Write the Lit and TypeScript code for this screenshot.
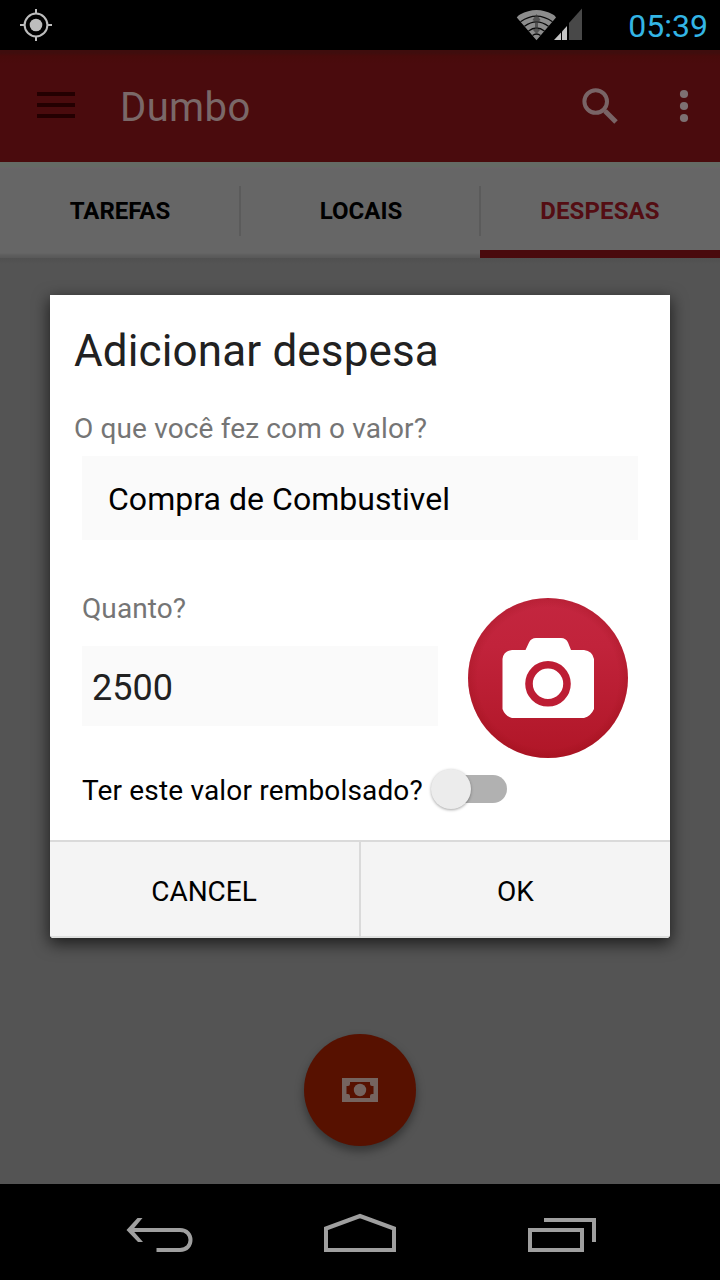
import { LitElement, html, css } from "lit";
import { customElement, property, state } from "lit/decorators.js";
import { classMap } from "lit/directives/class-map.js";

@customElement("status-bar")
class StatusBar extends LitElement {
  static styles = css`
    :host { display: flex; align-items: center; height: 50px; background: #000; }
    svg { display: block; }
    .gps { margin-left: 20px; }
    .signals { margin-left: auto; margin-right: 46px; }
    .clock { color: #33b5e5; font-size: 32px; line-height: 50px; padding-top: 1px; margin-right: 12px; height: 49px; white-space: nowrap; }
  `;
  render() {
    return html`
      <svg class="gps" width="32" height="50" viewBox="0 0 32 50" fill="none" stroke="#bdbdbd" stroke-width="2">
        <circle cx="16" cy="25" r="11.4" />
        <path d="M16 9v4M16 37v4M0 25h4M28 25h4" />
        <circle cx="16" cy="25" r="6.3" fill="#bdbdbd" stroke="none" />
      </svg>
      <svg class="signals" width="66" height="50" viewBox="516 0 66 50">
        <path d="M516.8 17.5Q518 15.500 520 14.500Q536.500 5.500 553 14.500Q555 15.500 556 17.500L536.500 40.300Z" fill="#8c8c8c" />
        <path d="M520.500 21.800Q536.500 10.500 552.500 21.800M524.500 26.300Q536.500 17.500 548.500 26.300M528.500 31Q536.500 25 544.500 31M532.500 35.500Q536.500 32.500 540.500 35.500" fill="none" stroke="#0a0a0a" stroke-width="1.300" />
        <path d="M536.500 14l4 6-2.500 1.500v7l2 1.500-3.500 4-3.500-4 2-1.500v-7l-2.500-1.500z" fill="#3a3a3a" opacity=".7" />
        <path d="M554 40l7-7.500V40z" fill="#c4c4c4" />
        <path d="M562 40v-8.500l5-5.500v14z" fill="#c4c4c4" />
        <path d="M569 40V23L582 8.500V40z" fill="#484848" />
      </svg>
      <div class="clock">05:39</div>
    `;
  }
}

@customElement("app-bar")
class AppBar extends LitElement {
  @property() heading = "";
  static styles = css`
    :host {
      display: flex; align-items: center; height: 112px;
      background: linear-gradient(#3f0d0d 0, #3f0d0d 3px, #480b0b 6px, #4a0b0d 14px);
    }
    svg { display: block; }
    .menu { margin-left: 36px; }
    .title { margin-left: 44px; padding-top: 3px; font-size: 40px; line-height: 46px; letter-spacing: .4px; color: #7a6868; }
    .search { margin-left: auto; }
    .more { margin-left: 57px; margin-right: 29px; }
  `;
  render() {
    return html`
      <svg class="menu" width="40" height="112" viewBox="36 50 40 112" stroke="#240001" stroke-width="4">
        <path d="M37 94h38M37 105h38M37 116h38" />
      </svg>
      <div class="title">${this.heading}</div>
      <svg class="search" width="40" height="112" viewBox="580 50 40 112" fill="none" stroke="#796466">
        <circle cx="595.700" cy="101.500" r="11.300" stroke-width="4" />
        <path d="M603.500 109.500l1.500 1.800" stroke-width="3" />
        <path d="M605 111l11 11" stroke-width="5" />
      </svg>
      <svg class="more" width="14" height="112" viewBox="677 50 14 112" fill="#7d7072">
        <circle cx="684" cy="94" r="4.100" /><circle cx="684" cy="106" r="4.100" /><circle cx="684" cy="118" r="4.100" />
      </svg>
    `;
  }
}

@customElement("tab-strip")
class TabStrip extends LitElement {
  @property({ type: Array }) tabs: string[] = [];
  @property({ type: Number }) active = 0;
  static styles = css`
    :host {
      display: grid; grid-template-columns: repeat(3, 1fr); height: 96px;
      background: linear-gradient(#656a65 0, #656a65 5px, #6b6469 6px, #666 8px, #666 91px, #5e5e5e 93px, #585858 96px);
    }
    .tab {
      display: flex; flex-direction: column; align-items: center; box-sizing: border-box;
      height: 96px; color: #000; font-size: 24px; font-weight: 700;
    }
    .row { display: flex; align-items: center; width: 100%; height: 50px; margin-top: 24px; }
    .label { flex: 1; text-align: center; line-height: 50px; }
    .tab:not(:last-child) .row { width: calc(100% + 2px); }
    .tab:not(:last-child) .row::after { content: ""; width: 2px; height: 50px; background: #5b5b5b; }
    .tab:nth-child(1) .label { padding-left: 2px; }
    .tab:nth-child(2) .label { padding-left: 4px; }
    .active { color: #540d13; }
    .active .label { letter-spacing: .12px; }
    .active::after { content: ""; width: 100%; height: 8px; margin-top: auto; background: #490a0d; }
  `;
  render() {
    return this.tabs.map((t, i) => html`
      <div class=${classMap({ tab: true, active: i === this.active })}>
        <div class="row"><span class="label">${t}</span></div>
      </div>`);
  }
}

@customElement("nav-bar")
class NavBar extends LitElement {
  static styles = css`
    :host { display: flex; justify-content: space-between; box-sizing: border-box; height: 96px; padding: 0 122px 0 124px; background: #000; }
    svg { display: block; }
    .home { margin-right: 2px; }
  `;
  render() {
    return html`
      <svg width="72" height="96" viewBox="124 1184 72 96" fill="none" stroke="#9f9f9f" stroke-width="4">
        <path d="M132 1230h48c14 0 14 20 0 20h-23.500" />
        <path d="M126.500 1230L137.500 1218h5L132.500 1230l10.500 12H138z" fill="#9f9f9f" stroke="none" />
      </svg>
      <svg class="home" width="76" height="96" viewBox="322 1184 76 96" fill="none" stroke="#9f9f9f" stroke-width="4">
        <path d="M326 1250V1228.500L360 1216l34 12.500V1250z" />
      </svg>
      <svg width="72" height="96" viewBox="526 1184 72 96" fill="none" stroke="#9f9f9f" stroke-width="4">
        <path d="M530 1230h52v20h-52zM544 1220h50v22" />
      </svg>
    `;
  }
}

@customElement("expense-dialog")
class ExpenseDialog extends LitElement {
  @state() refunded = false;
  static styles = css`
    :host {
      display: flex; flex-direction: column; box-sizing: border-box; width: 620px; height: 643px;
      background: #fff; border-radius: 0 0 4px 4px; overflow: hidden;
      box-shadow: 0 5px 16px 1px rgba(0, 0, 0, .65);
    }
    .title { margin: 0; padding: 26px 0 0 24px; font-size: 44px; font-weight: 400; line-height: 60px; letter-spacing: .13px; color: #212121; }
    .question { padding: 28px 0 0 24px; font-size: 28px; line-height: 40px; letter-spacing: .14px; color: #757575; }
    .field { background: #fafafa; color: #000; white-space: nowrap; }
    .reason { margin: 7px 32px 0; padding-left: 26px; font-size: 32px; line-height: 86px; height: 84px; letter-spacing: .04px; }
    .amount-row { display: grid; grid-template-columns: 356px 160px; column-gap: 30px; margin: 48px 0 0 32px; height: 170px; }
    .quanto { padding-top: 1px; font-size: 28px; line-height: 40px; letter-spacing: .1px; color: #757575; }
    .amount { margin-top: 17px; height: 80px; padding-left: 10px; font-size: 36px; line-height: 84px; color: #212121; }
    .camera { margin-top: 10px; display: block; }
    .refund { display: flex; align-items: center; height: 56px; margin-left: 32px; margin-top: 3px; font-size: 28px; color: #000; }
    .refund span { white-space: nowrap; width: 349px; line-height: 56px; padding-top: 4px; letter-spacing: .17px; }
    .switch { display: flex; align-items: center; width: 76px; height: 28px; border-radius: 0 14px 14px 0; background: linear-gradient(90deg, transparent 20px, #b1b1b1 20px); }
    .knob { width: 40px; height: 40px; border-radius: 50%; background: #ececec; box-shadow: 0 1px 3px rgba(0, 0, 0, .35); }
    .on .knob { margin-left: 36px; }
    .actions { display: grid; grid-template-columns: 1fr 1fr; margin-top: auto; height: 96px; border-top: 2px solid #dadada; background: #f4f4f4; box-shadow: inset 0 -2px #dfe0df; }
    .action { padding: 0; border: 0; background: none; font: 400 28px/99px Roboto, sans-serif; color: #000; height: 96px; }
    .action:first-child { padding-right: 2px; }
    .action + .action { border-left: 2px solid #dadada; margin-left: -1px; }
  `;
  render() {
    return html`
      <h1 class="title">Adicionar despesa</h1>
      <div class="question">O que você fez com o valor?</div>
      <div class="field reason">Compra de Combustivel</div>
      <div class="amount-row">
        <div>
          <div class="quanto">Quanto?</div>
          <div class="field amount">2500</div>
        </div>
        <svg class="camera" width="160" height="160" viewBox="468 598 160 160">
          <defs>
            <linearGradient id="g" x1="0" y1="0" x2="0" y2="1"><stop offset="0" stop-color="#c3263f" /><stop offset=".3" stop-color="#c1233b" /><stop offset="1" stop-color="#b01627" /></linearGradient>
            <radialGradient id="e"><stop offset=".88" stop-color="#700" stop-opacity="0" /><stop offset="1" stop-color="#700" stop-opacity=".14" /></radialGradient>
          </defs>
          <circle cx="548" cy="678" r="80" fill="url(#g)" />
          <circle cx="548" cy="678" r="80" fill="url(#e)" />
          <path d="M512 650h13.500l3.500-7.500q2-4.500 7-4.500h25q5 0 7 4.500l3 7.500h13q8.500 1 10 9v50q-3 7-10 9h-72q-7-2-9.500-9v-50q1-8 9.500-9z" fill="#fff" />
          <circle cx="548" cy="683.800" r="19" fill="#fff" stroke="#bd1d34" stroke-width="7.600" />
        </svg>
      </div>
      <div class="refund">
        <span>Ter este valor rembolsado?</span>
        <div class=${classMap({ switch: true, on: this.refunded })} @click=${() => (this.refunded = !this.refunded)}><div class="knob"></div></div>
      </div>
      <div class="actions">
        <button class="action">CANCEL</button>
        <button class="action">OK</button>
      </div>
    `;
  }
}

@customElement("app-root")
class AppRoot extends LitElement {
  static styles = css`
    :host { display: flex; flex-direction: column; position: relative; width: 720px; height: 1280px; overflow: hidden; font-family: Roboto, sans-serif; background: #545454; }
    .content { flex: 1; display: flex; justify-content: center; align-items: flex-end; padding-bottom: 38px; background: linear-gradient(#505050, #545454 6px); }
    .fab { display: grid; place-items: center; width: 112px; height: 112px; border-radius: 50%; background: #571100; box-shadow: 0 5px 10px rgba(0, 0, 0, .38); }
    .modal { position: absolute; top: 295px; left: 50px; }
  `;
  render() {
    return html`
      <status-bar></status-bar>
      <app-bar heading="Dumbo"></app-bar>
      <tab-strip .tabs=${["TAREFAS", "LOCAIS", "DESPESAS"]} .active=${2}></tab-strip>
      <div class="content">
        <div class="fab">
          <svg width="36" height="24" viewBox="0 0 36 24">
            <path d="M0 0h36v24H0z" fill="#75645f" />
            <path d="M8 4h20v2q0 2 2 2h1.500v8H30q-2 0-2 2v2H8v-2q0-2-2-2H4.500V8H6q2 0 2-2z" fill="#571100" />
            <circle cx="18" cy="12" r="6.200" fill="#75645f" />
          </svg>
        </div>
      </div>
      <nav-bar></nav-bar>
      <expense-dialog class="modal"></expense-dialog>
    `;
  }
}
